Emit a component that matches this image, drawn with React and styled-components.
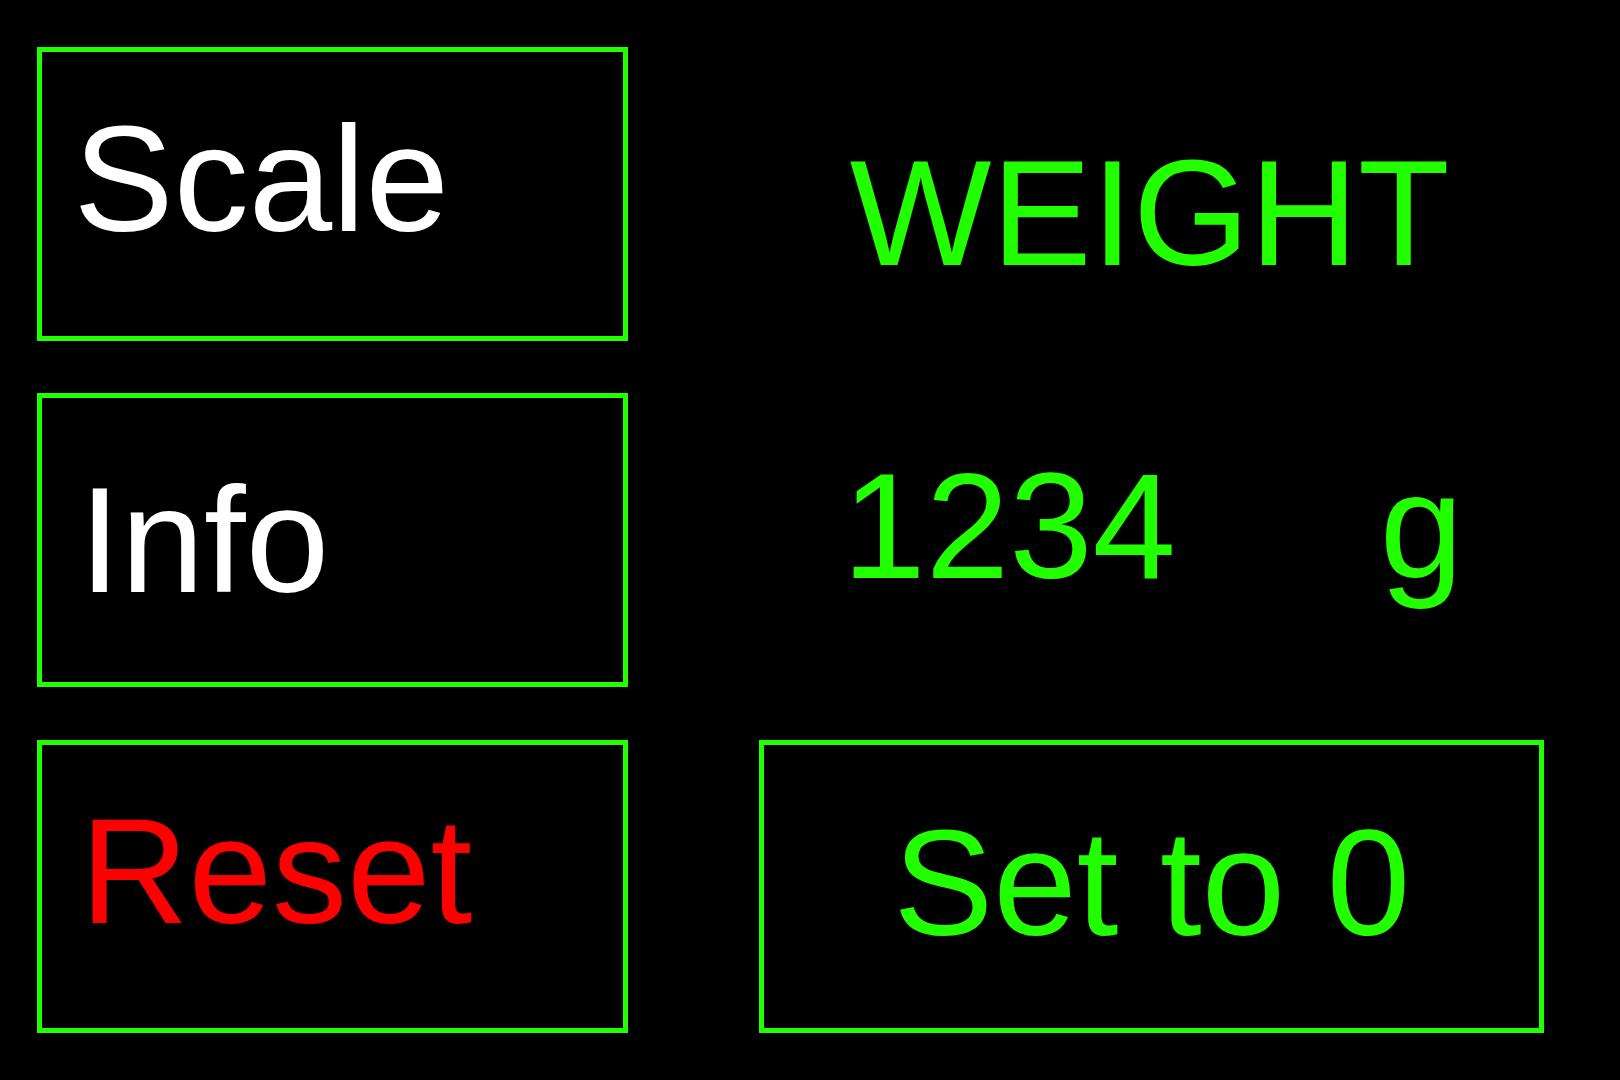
import styled, { createGlobalStyle } from "styled-components";

const GREEN = "#22ff00";

const GlobalStyle = createGlobalStyle`
  html, body {
    margin: 0;
    padding: 0;
    background: #000;
  }
  body {
    font-family: "Liberation Sans", Arial, sans-serif;
  }
`;

const Screen = styled.div`
  width: 1620px;
  height: 1080px;
  box-sizing: border-box;
  background: #000;
  padding: 47.3px 0 0 37.3px;
  display: grid;
  grid-template-columns: 590.4px 785px;
  grid-template-rows: repeat(3, 293.6px);
  column-gap: 131.6px;
  row-gap: 52.6px;
  align-content: start;
  font-size: 150px;
  line-height: normal;
`;

const Button = styled.div`
  box-sizing: border-box;
  border: 5.2px solid ${GREEN};
  display: flex;
  align-items: ${(p) => (p.$top != null ? "flex-start" : "center")};
  justify-content: ${(p) => (p.$centered ? "center" : "flex-start")};
  padding-top: ${(p) => (p.$top != null ? `${p.$top}px` : "0")};
  padding-left: ${(p) => (p.$left != null ? `${p.$left}px` : "0")};
  color: ${(p) => p.$color || "#fff"};
  white-space: nowrap;
`;

const Title = styled.div`
  display: flex;
  justify-content: center;
  align-items: flex-start;
  padding-top: 79.5px;
  padding-right: 4px;
  color: ${GREEN};
`;

const Reading = styled.div`
  display: flex;
  justify-content: space-between;
  align-items: flex-start;
  padding: 47px 81px 0 83px;
  color: ${GREEN};
`;

export default function App() {
  return (
    <>
      <GlobalStyle />
      <Screen>
        <Button $top={40.7} $left={31.3}>Scale</Button>
        <Title>WEIGHT</Title>

        <Button $left={36.7}>Info</Button>
        <Reading>
          <span>1234</span>
          <span>g</span>
        </Reading>

        <Button $top={40.5} $left={38} $color="#ff0000">Reset</Button>
        <Button $centered $top={52.6} $color={GREEN}>Set to 0</Button>
      </Screen>
    </>
  );
}
